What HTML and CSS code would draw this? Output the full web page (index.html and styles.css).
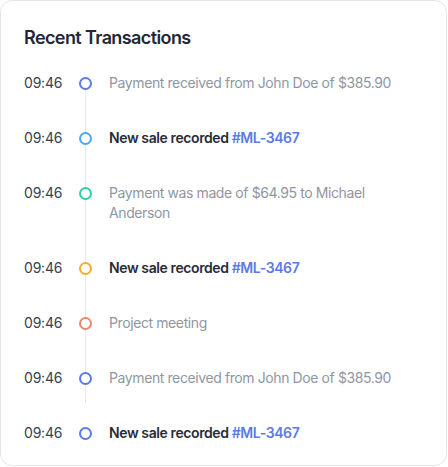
FILE: index.html
```html
<!DOCTYPE html>
<html>
<head>
<meta charset="utf-8">
<link rel="stylesheet" href="styles.css">
</head>
<body>
<div class="card">
  <h2 class="title">Recent Transactions</h2>
  <ul class="timeline">
    <li class="item"><span class="time">09:46</span><span class="dot dot-blue"></span><span class="text muted">Payment received from John Doe of $385.90</span></li>
    <li class="item"><span class="time">09:46</span><span class="dot dot-sky"></span><span class="text strong">New sale recorded <a class="link">#ML-3467</a></span></li>
    <li class="item"><span class="time">09:46</span><span class="dot dot-teal"></span><span class="text muted">Payment was made of $64.95 to Michael Anderson</span></li>
    <li class="item"><span class="time">09:46</span><span class="dot dot-amber"></span><span class="text strong">New sale recorded <a class="link">#ML-3467</a></span></li>
    <li class="item"><span class="time">09:46</span><span class="dot dot-salmon"></span><span class="text muted">Project meeting</span></li>
    <li class="item"><span class="time">09:46</span><span class="dot dot-blue"></span><span class="text muted">Payment received from John Doe of $385.90</span></li>
    <li class="item"><span class="time">09:46</span><span class="dot dot-blue"></span><span class="text strong">New sale recorded <a class="link">#ML-3467</a></span></li>
  </ul>
</div>
</body>
</html>
```
FILE: styles.css
```css
* { box-sizing: border-box; }
html, body { margin: 0; padding: 0; background: #ffffff; }
body {
  font-family: "Inter", "Noto Sans", sans-serif;
  -webkit-font-smoothing: antialiased;
}
.card {
  width: 447px;
  height: 466px;
  border: 1px solid #e3e6ea;
  border-radius: 12px;
  padding: 25px 23px 0 23px;
  background: #fff;
}
.title {
  margin: 0;
  font-size: 18px;
  line-height: 24px;
  font-weight: 600;
  color: #1f2738;
  letter-spacing: -0.6px;
}
.timeline {
  list-style: none;
  margin: 23px 0 0 0;
  padding: 0;
  position: relative;
}
.timeline::before {
  content: "";
  position: absolute;
  left: 61px;
  top: 10px;
  bottom: 40px;
  width: 1px;
  background: #e3e6ea;
}
.item {
  display: grid;
  grid-template-columns: 55px 13px 1fr;
  align-items: start;
  padding-bottom: 35px;
  font-size: 14px;
  line-height: 20px;
  letter-spacing: -0.4px;
}
.item:last-child { padding-bottom: 0; }
.time { color: #3a4150; letter-spacing: -0.2px; }
.dot {
  position: relative;
  width: 13px;
  height: 13px;
  margin-top: 3.5px;
  border-radius: 50%;
  border: 2.5px solid #5b7be6;
  background: #fff;
}
.dot-blue { border-color: #5b7be6; }
.dot-sky { border-color: #47aaec; }
.dot-teal { border-color: #2ecfa8; }
.dot-amber { border-color: #f4ae2c; }
.dot-salmon { border-color: #ec8867; }
.text { min-width: 0; margin-left: 17px; }
.muted { color: #9096a2; }
.strong { color: #262c3a; font-weight: 600; }
.link { color: #5b7be6; text-decoration: none; }
```
